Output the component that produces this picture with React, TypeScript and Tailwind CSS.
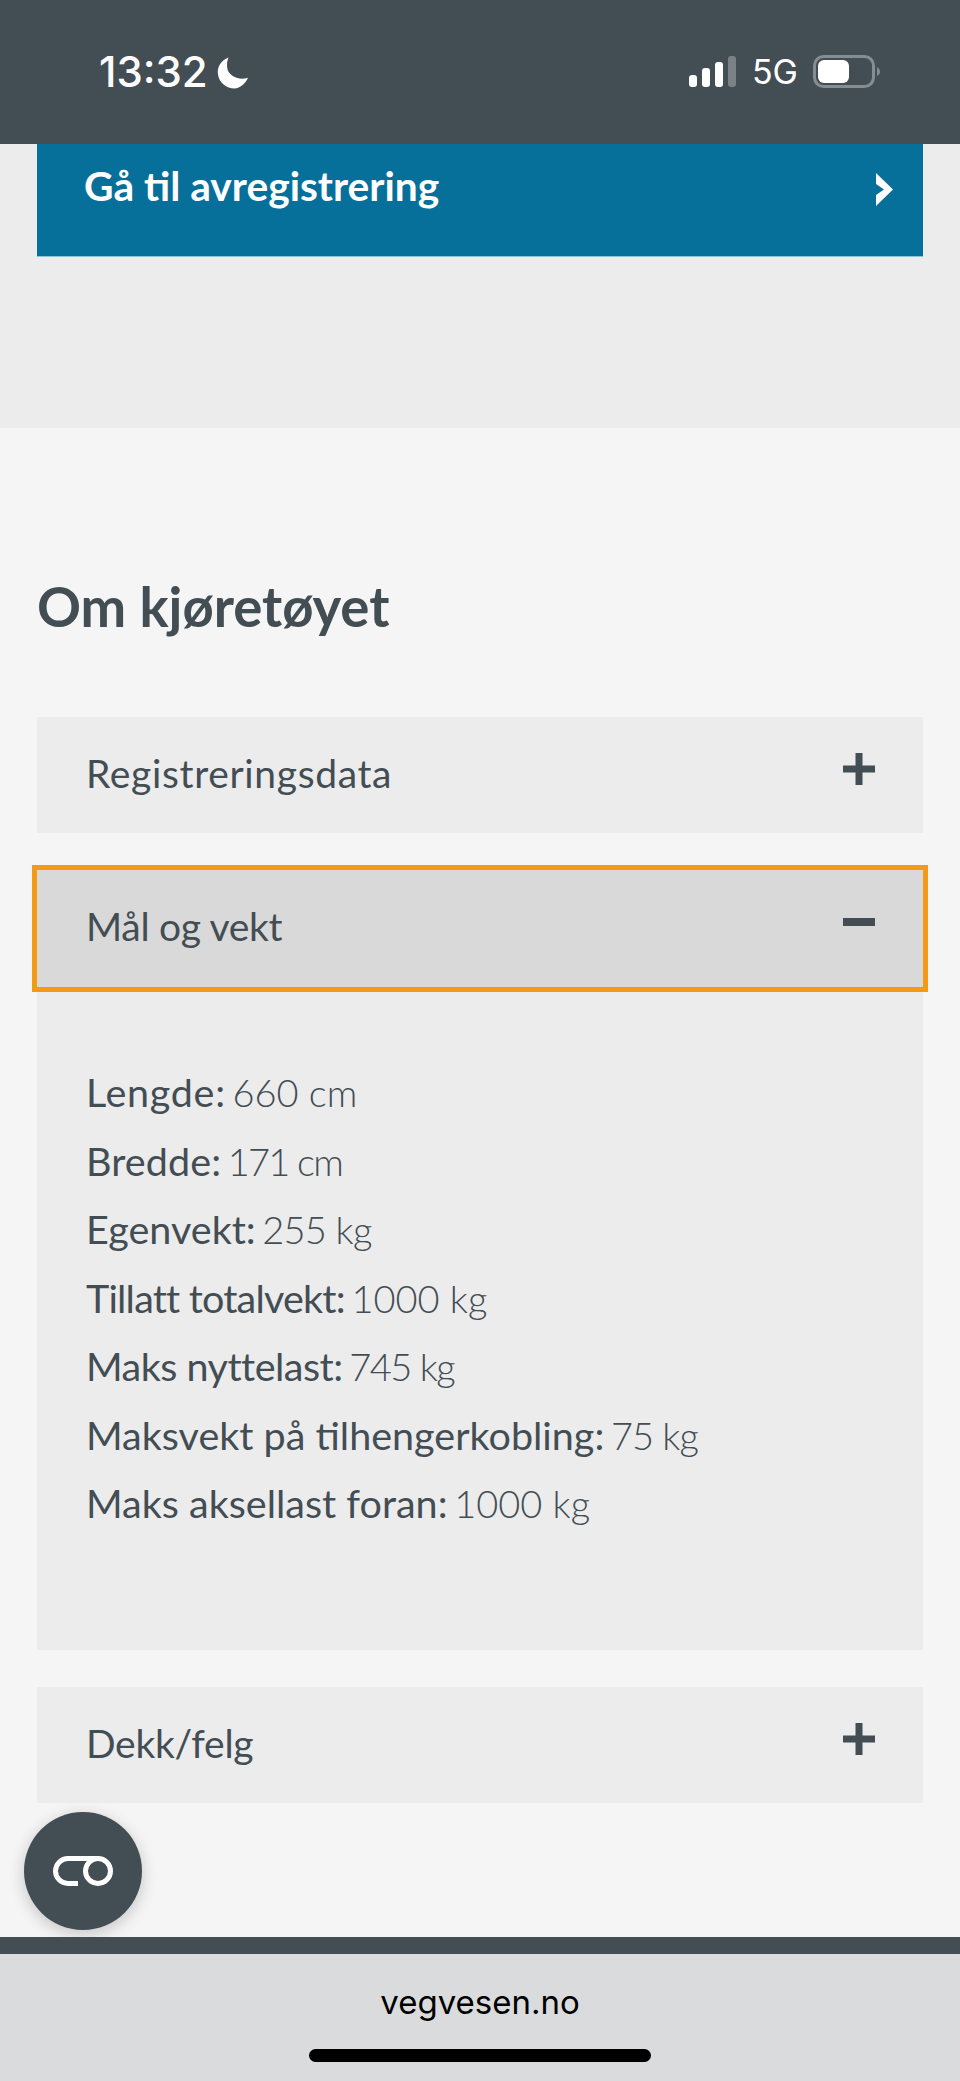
import React from "react";

// tracking per row: the original web font is narrower on some words than Lato
const specs = [
  { label: "Lengde:", value: "660 cm", labelClass: "tracking-[0.7px]", valueClass: "" },
  { label: "Bredde:", value: "171 cm", labelClass: "tracking-[0.1px]", valueClass: "tracking-[-1.8px]" },
  { label: "Egenvekt:", value: "255 kg", labelClass: "", valueClass: "tracking-[-0.8px]" },
  { label: "Tillatt totalvekt:", value: "1000 kg", labelClass: "tracking-[-0.8px]", valueClass: "" },
  { label: "Maks nyttelast:", value: "745 kg", labelClass: "tracking-[-0.5px]", valueClass: "tracking-[-1.5px]" },
  { label: "Maksvekt på tilhengerkobling:", value: "75 kg", labelClass: "", valueClass: "tracking-[-1px]" },
  { label: "Maks aksellast foran:", value: "1000 kg", labelClass: "", valueClass: "" },
];

const StatusBar: React.FC = () => (
  <div className="h-[144px] bg-[#434d54] flex items-start justify-between pl-[99px] pr-[79px] pt-[48px] text-white font-['Inter',sans-serif]">
    <div className="flex items-center gap-[8px] h-[48px]">
      <span className="text-[42px] leading-[48px] font-medium">13:32</span>
      <svg width="33" height="34" viewBox="0 0 34 34" className="mt-[2px]">
        <path d="M13 1 C5 4 1 11 2 18 C3 27 11 33 19 33 C25 33 30 28 33 22 C24 25 15 21 12 14 C11 9 11 5 13 1 Z" fill="#fff" />
      </svg>
    </div>
    <div className="flex items-center h-[48px]">
      <svg width="48" height="32" viewBox="0 0 48 32" className="mr-[15px]">
        <rect x="0" y="19" width="8" height="12" rx="3" fill="#fff" />
        <rect x="13" y="12" width="8" height="19" rx="3" fill="#fff" />
        <rect x="26" y="6" width="8" height="25" rx="3" fill="#fff" />
        <rect x="39" y="0" width="8" height="31" rx="3" fill="#7a8287" />
      </svg>
      <span className="text-[34px] leading-[48px] mr-[15px]">5G</span>
      <svg width="68" height="34" viewBox="0 0 68 34">
        <rect x="1.5" y="1.5" width="59" height="30" rx="9" fill="none" stroke="#868d92" strokeWidth="3" />
        <rect x="5" y="5" width="31" height="23" rx="6" fill="#fff" />
        <path d="M64 12 C66 13 67 15 67 17 C67 18 66 20 64 21 Z" fill="#868d92" />
      </svg>
    </div>
  </div>
);

const PlusIcon: React.FC = () => (
  <svg width="32" height="32" viewBox="0 0 32 32" className="shrink-0">
    <path d="M12.5 0h7v12.5H32v7H19.5V32h-7V19.5H0v-7h12.5z" fill="#434d54" />
  </svg>
);

const MinusIcon: React.FC = () => (
  <svg width="32" height="32" viewBox="0 0 32 32" className="shrink-0">
    <rect x="0" y="12" width="32" height="8" fill="#434d54" />
  </svg>
);

const AccordionRow: React.FC<{ title: string; trackClass: string }> = ({ title, trackClass }) => (
  <div className="h-[116px] bg-[#ececec] flex justify-between pl-[49px] pr-[48px] pt-[36px]">
    <span className={`text-[39px] leading-[56px] mt-[-8px] text-[#434d54] ${trackClass}`}>{title}</span>
    <PlusIcon />
  </div>
);

export default function App() {
  return (
    <div className="relative w-[960px] h-[2081px] overflow-hidden bg-[#f5f5f5] font-['Lato',sans-serif]">
      <StatusBar />

      <div className="h-[284px] bg-[#ececec] px-[37px]">
        <div className="h-[113px] bg-[#06709a] border-b border-[#8cc4dc] flex justify-between pl-[47px] pr-[29px] pt-[17px]">
          <span className="text-[40.7px] leading-[50px] font-bold text-white">Gå til avregistrering</span>
          <svg width="18" height="33" viewBox="0 0 18 33" className="mt-[12px]">
            <path d="M0 0 L17 16.5 L0 33 L0 22 L8 16.5 L0 11 Z" fill="#fff" />
          </svg>
        </div>
      </div>

      <div className="px-[37px]">
        <h2 className="pt-[146px] h-[289px] text-[54.5px] leading-[64px] font-bold text-[#434d54]">Om kjøretøyet</h2>

        <AccordionRow title="Registreringsdata" trackClass="tracking-[0.65px]" />

        <div className="mt-[37px] h-[117px] bg-[#d9d9d9] outline-[5px] outline-solid outline-[#f59a16] flex justify-between pl-[49px] pr-[48px] pt-[36px]">
          <span className="text-[39px] leading-[56px] mt-[-8px] text-[#434d54] tracking-[-0.3px]">Mål og vekt</span>
          <MinusIcon />
        </div>

        <div className="h-[663px] bg-[#ececec] pl-[49px] pt-[71px] text-[39.5px] leading-[68.5px] text-[#434d54]">
          {specs.map((s) => (
            <div key={s.label}>
              <span className={s.labelClass}>{s.label}</span>{" "}
              <span className={`font-light text-[38px] ml-[-3.5px] ${s.valueClass}`}>{s.value}</span>
            </div>
          ))}
        </div>

        <div className="mt-[37px]">
          <AccordionRow title="Dekk/felg" trackClass="tracking-[-0.3px]" />
        </div>
      </div>

      <button className="absolute left-[24px] top-[1812px] w-[118px] h-[118px] rounded-full bg-[#434d54] shadow-[0_4px_16px_rgba(0,0,0,0.2)] flex items-center justify-center">
        <svg width="60" height="30" viewBox="0 0 60 30">
          <path d="M25 27.5 H15 A12.5 12.5 0 0 1 15 2.5 H45 A12.5 12.5 0 0 1 45 27.5 A12.5 12.5 0 0 1 45 2.5" fill="none" stroke="#fff" strokeWidth="5" />
        </svg>
      </button>

      <div className="absolute left-0 right-0 top-[1937px] bottom-0 bg-[#dadbdd]">
        <div className="h-[17px] bg-[#434d54]" />
        <div className="text-center text-[33px] leading-[40px] mt-[28px] text-black font-['Inter',sans-serif]">vegvesen.no</div>
        <div className="mx-auto mt-[27px] w-[342px] h-[13px] rounded-full bg-black" />
      </div>
    </div>
  );
}
